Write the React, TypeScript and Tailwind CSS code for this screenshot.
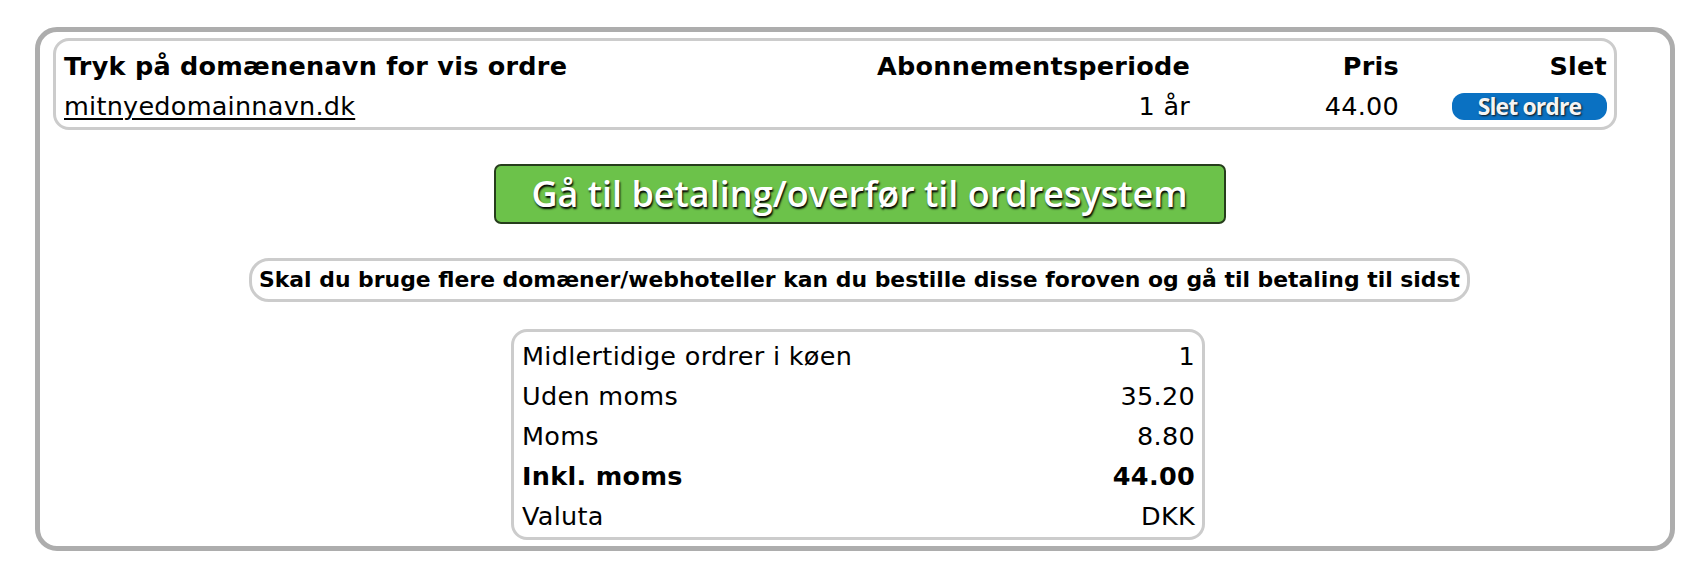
import React from "react";

const rows: { label: string; value: string; bold?: boolean }[] = [
  { label: "Midlertidige ordrer i køen", value: "1" },
  { label: "Uden moms", value: "35.20" },
  { label: "Moms", value: "8.80" },
  { label: "Inkl. moms", value: "44.00", bold: true },
  { label: "Valuta", value: "DKK" },
];

export default function App() {
  return (
    <div className="w-[1700px] h-[572px] bg-white pt-[27px] pl-[35px] text-black [font-family:'DejaVu_Sans',Verdana,sans-serif]">
      <div className="w-[1640px] h-[524px] border-[5px] border-[#adadad] rounded-[22px] pt-[6px] pl-[13px] pr-[4px] flex flex-col">
        <div className="w-[1564px] h-[92px] border-[3px] border-[#cccccc] rounded-[16px] pl-[8px] pr-[7px] pt-[5px]">
          <div className="grid grid-cols-[1fr_auto_209px_208px] text-[25.5px] leading-[40px] tracking-[0.25px]">
            <div className="font-bold">Tryk på domænenavn for vis ordre</div>
            <div className="font-bold text-right">Abonnementsperiode</div>
            <div className="font-bold text-right">Pris</div>
            <div className="font-bold text-right">Slet</div>
            <div>
              <a href="#" className="underline underline-offset-[3px] decoration-[2px]">mitnyedomainnavn.dk</a>
            </div>
            <div className="text-right">1 år</div>
            <div className="text-right">44.00</div>
            <div className="flex justify-end items-center">
              <button className="w-[155px] h-[27px] rounded-[12px] bg-[#0a71c2] text-[#f4f4f4] text-[23px] leading-[27px] font-bold [font-family:'Open_Sans',sans-serif] [text-shadow:1px_1px_2px_#111] tracking-[-0.9px]">
                Slet ordre
              </button>
            </div>
          </div>
        </div>

        <div className="flex justify-center mt-[34px]">
          <button className="w-[732px] h-[60px] bg-[#6cc24a] border-[2px] border-[#263d1c] rounded-[7px] text-white text-[36px] leading-[56px] font-semibold [font-family:'Open_Sans',sans-serif] [text-shadow:1px_2px_2px_#000] tracking-[0px]">
            Gå til betaling/overfør til ordresystem
          </button>
        </div>

        <div className="flex justify-center mt-[34px]">
          <div className="w-[1221px] h-[44px] border-[3px] border-[#cccccc] rounded-[20px] flex items-center justify-center text-[21.9px] font-bold">
            Skal du bruge flere domæner/webhoteller kan du bestille disse foroven og gå til betaling til sidst
          </div>
        </div>

        <div className="flex justify-center mt-[27px]">
          <div className="w-[694px] h-[211px] border-[3px] border-[#cccccc] rounded-[16px] pl-[8px] pr-[7px] pt-[4px] ml-[-3px]">
            {rows.map((r) => (
              <div
                key={r.label}
                className={`flex justify-between text-[25.5px] leading-[40px] tracking-[0.3px] ${r.bold ? "font-bold" : ""}`}
              >
                <span>{r.label}</span>
                <span>{r.value}</span>
              </div>
            ))}
          </div>
        </div>
      </div>
    </div>
  );
}
